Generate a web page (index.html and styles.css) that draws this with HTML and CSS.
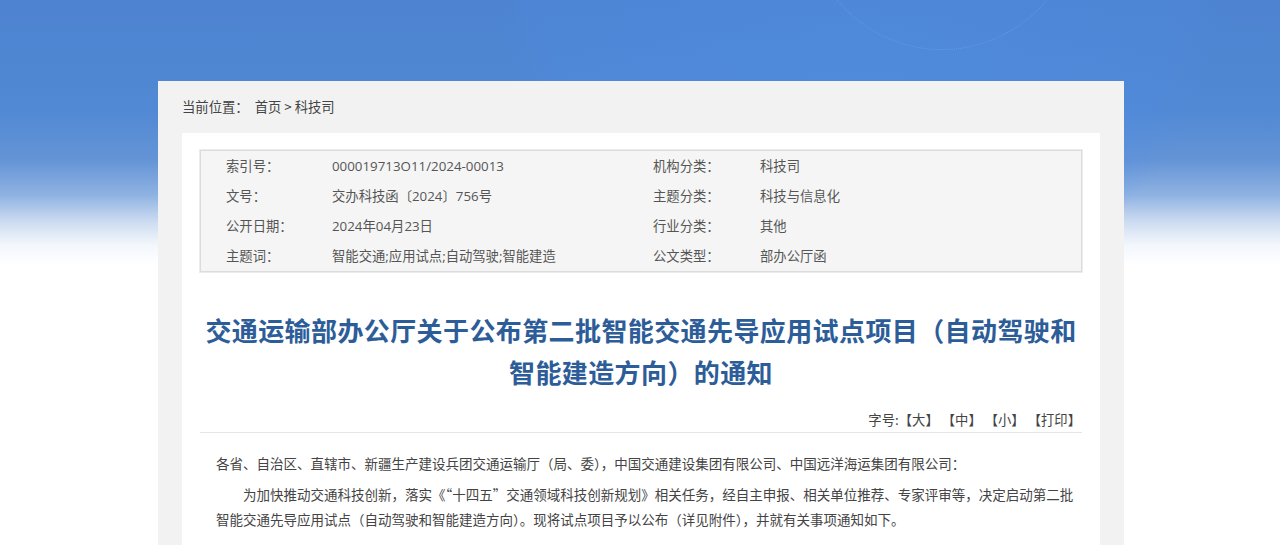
FILE: index.html
```html
<!DOCTYPE html>
<html lang="zh-CN">
<head>
<meta charset="utf-8">
<title>交通运输部办公厅关于公布第二批智能交通先导应用试点项目（自动驾驶和智能建造方向）的通知</title>
<link rel="stylesheet" href="styles.css">
</head>
<body>
<div class="bg-deco">
  <div class="ring-big"></div>
  <div class="ring-dots"></div>
</div>
<div class="page">
  <div class="crumb">当前位置：&nbsp;&nbsp;<a href="#">首页</a> &gt; <a href="#">科技司</a></div>
  <div class="content">
    <div class="info">
      <div class="lbl">索引号：</div><div class="val">000019713O11/2024-00013</div>
      <div class="lbl">机构分类：</div><div class="val">科技司</div>
      <div class="lbl">文号：</div><div class="val">交办科技函〔2024〕756号</div>
      <div class="lbl">主题分类：</div><div class="val">科技与信息化</div>
      <div class="lbl">公开日期：</div><div class="val">2024年04月23日</div>
      <div class="lbl">行业分类：</div><div class="val">其他</div>
      <div class="lbl">主题词：</div><div class="val">智能交通;应用试点;自动驾驶;智能建造</div>
      <div class="lbl">公文类型：</div><div class="val">部办公厅函</div>
    </div>
    <h1 class="title">交通运输部办公厅关于公布第二批智能交通先导应用试点项目（自动驾驶和<br>智能建造方向）的通知</h1>
    <div class="tools">字号:【<a href="#">大</a>】 【<a href="#">中</a>】 【<a href="#">小</a>】 【<a href="#">打印</a>】</div>
    <div class="article">
      <p class="noind">各省、自治区、直辖市、新疆生产建设兵团交通运输厅（局、委），中国交通建设集团有限公司、中国远洋海运集团有限公司：</p>
      <p>为加快推动交通科技创新，落实《“十四五”交通领域科技创新规划》相关任务，经自主申报、相关单位推荐、专家评审等，决定启动第二批智能交通先导应用试点（自动驾驶和智能建造方向）。现将试点项目予以公布（详见附件），并就有关事项通知如下。</p>
    </div>
  </div>
</div>
</body>
</html>
```

FILE: styles.css
```css
html, body {
  margin: 0;
  padding: 0;
}
body {
  font-family: "Noto Sans CJK SC", "Noto Sans", sans-serif;
  color: #444;
  background: linear-gradient(180deg, #4d83d0 0px, #5189d4 110px, #6494d6 160px, #8fb2e2 195px, #cddcf1 222px, #f3f7fc 245px, #ffffff 265px);
  height: 545px;
  overflow: hidden;
  position: relative;
}
a {
  color: inherit;
  text-decoration: none;
}
.bg-deco {
  position: absolute;
  left: 0;
  top: 0;
  width: 1280px;
  height: 260px;
  overflow: hidden;
  pointer-events: none;
}
.ring-big {
  position: absolute;
  left: 490px;
  top: -420px;
  width: 740px;
  height: 740px;
  border-radius: 50%;
  background: radial-gradient(circle, rgba(80, 145, 235, 0.35) 0%, rgba(80, 140, 230, 0.25) 62%, rgba(255, 255, 255, 0) 71%);
}
.ring-dots {
  position: absolute;
  left: 806px;
  top: -222px;
  width: 270px;
  height: 270px;
  border-radius: 50%;
  border: 1px dotted rgba(190, 215, 250, 0.22);
}
.page {
  position: relative;
  width: 966px;
  margin: 81px 0 0 158px;
  background: #f2f2f2;
  padding: 0 24px;
  box-sizing: border-box;
  min-height: 480px;
}
.crumb {
  height: 52px;
  line-height: 52px;
  font-size: 13.33px;
  color: #444;
}
.content {
  background: #fff;
  padding: 17px 18px 40px;
  min-height: 420px;
}
.info {
  display: grid;
  grid-template-columns: 106px 321px 107px 1fr;
  grid-auto-rows: 30px;
  padding-left: 25px;
  background: #f5f5f5;
  border: 1px solid #dcdcdc;
  box-shadow: 0 0 0 1px #ececec;
  font-family: "Open Sans", "Noto Sans CJK SC", sans-serif;
  font-size: 13.33px;
  color: #555;
}
.info > div {
  line-height: 30px;
  white-space: nowrap;
}
.title {
  margin: 37px 0 0;
  text-align: center;
  font-size: 26px;
  letter-spacing: 0.4px;
  line-height: 42px;
  font-weight: bold;
  color: #2d5d98;
}
.tools {
  margin-top: 17px;
  text-align: right;
  font-size: 13.33px;
  line-height: 20px;
  height: 22px;
  padding-right: 1px;
  color: #444;
  border-bottom: 1px solid #e6e6e6;
}
.article {
  padding: 18px 8px 0 16px;
  font-size: 13.5px;
  line-height: 25px;
  color: #444;
}
.article p {
  margin: 0 0 6px;
  text-indent: 2em;
}
.article p.noind {
  text-indent: 0;
}
```
